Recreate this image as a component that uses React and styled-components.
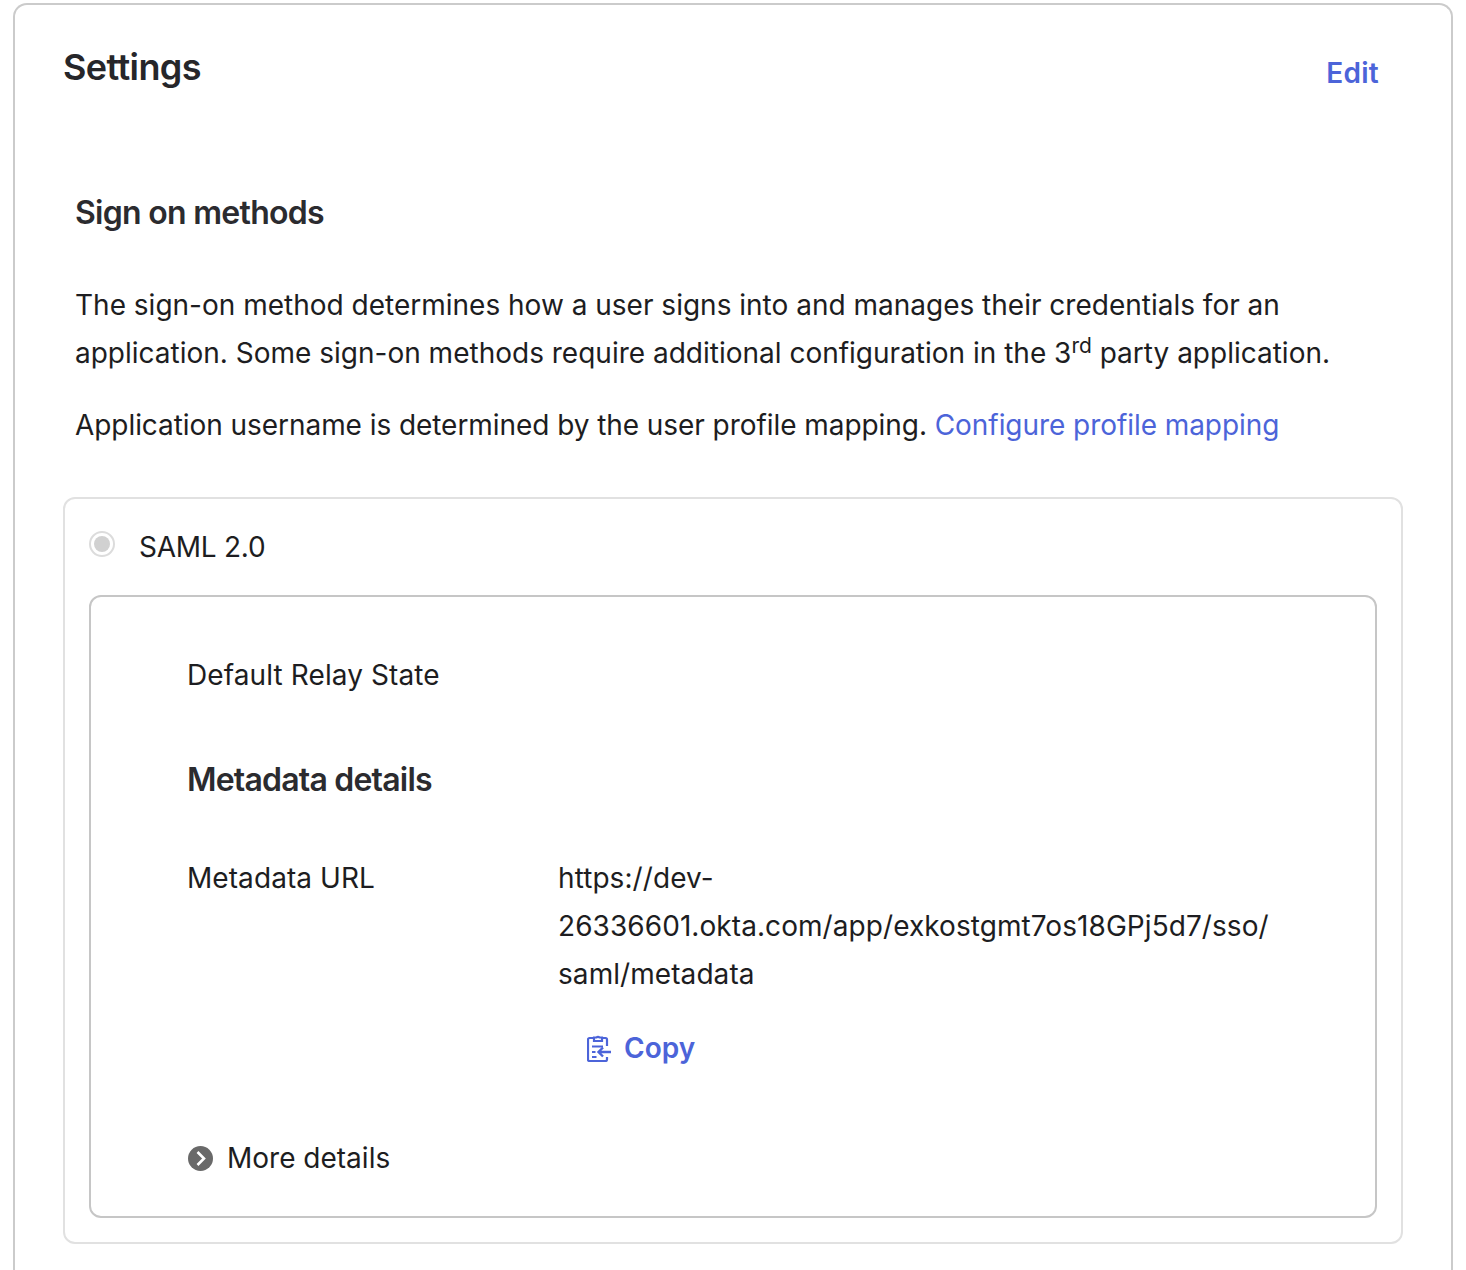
import React from "react";
import styled, { createGlobalStyle } from "styled-components";

const Global = createGlobalStyle`
  html, body {
    margin: 0;
    padding: 0;
    background: #fff;
  }
  body {
    font-family: Inter, "Liberation Sans", sans-serif;
    color: #1d1d21;
  }
`;

const Page = styled.div`
  height: 1270px;
  overflow: hidden;
  padding: 3px 13px 0;
  box-sizing: border-box;
`;

const Card = styled.section`
  border: 2px solid #cbcbcb;
  border-bottom: 0;
  border-radius: 14px 14px 0 0;
  padding: 39px 48px 0;
  height: 1300px;
  box-sizing: border-box;
`;

const Header = styled.header`
  display: flex;
  justify-content: space-between;
  align-items: flex-start;
  padding-right: 24px;
`;

const Title = styled.h2`
  margin: 0;
  font-size: 36px;
  line-height: 46px;
  font-weight: 600;
  letter-spacing: -0.6px;
  color: #26262a;
`;

const EditLink = styled.a`
  font-size: 28px;
  line-height: 40px;
  margin-top: 9px;
  font-weight: 600;
  letter-spacing: 0.3px;
  color: #4c64d9;
`;

const Intro = styled.div`
  padding: 0 12px;
  margin-top: 100px;
`;

const SectionTitle = styled.h3`
  margin: 0;
  font-size: 32px;
  line-height: 40px;
  font-weight: 600;
  letter-spacing: -0.72px;
  color: #2b2b2f;
`;

const Paragraph = styled.p`
  margin: ${(p) => p.$top || 0}px 0 0;
  font-size: 28px;
  line-height: 48px;
  font-weight: 400;
  white-space: nowrap;
  letter-spacing: ${(p) => p.$spacing || 0}px;

  sup {
    font-size: 21px;
    line-height: 0;
  }
`;

const TextLink = styled.a`
  color: #4c64d9;
`;

const MethodBox = styled.div`
  margin-top: 48px;
  border: 2px solid #e1e1e1;
  border-radius: 12px;
  padding: 24px;
`;

const MethodRow = styled.div`
  display: flex;
  align-items: flex-start;
  gap: 24px;
  font-size: 28px;
  line-height: 48px;
  letter-spacing: -0.25px;
`;

const Radio = styled.span`
  width: 26px;
  height: 26px;
  margin-top: 8px;
  border: 2px solid #dcdcdc;
  border-radius: 50%;
  box-sizing: border-box;
  display: flex;
  align-items: center;
  justify-content: center;

  &::after {
    content: "";
    width: 16px;
    height: 16px;
    border-radius: 50%;
    background: #d1d1d1;
  }
`;

const InnerBox = styled.div`
  margin-top: 24px;
  border: 2px solid #c6c6c6;
  border-radius: 12px;
  padding: 54px 96px 34px;
  height: 623px;
  box-sizing: border-box;
`;

const PlainRow = styled.div`
  font-size: 28px;
  line-height: 48px;
  letter-spacing: 0.1px;
`;

const SubTitle = styled.h4`
  margin: 57px 0 0;
  font-size: 32px;
  line-height: 48px;
  font-weight: 600;
  letter-spacing: -0.8px;
  color: #2b2b2f;
`;

const DetailRow = styled.div`
  display: grid;
  grid-template-columns: 371px 1fr;
  margin-top: 50px;
  font-size: 28px;
  line-height: 48px;
  letter-spacing: 0.07px;
`;

const UrlText = styled.div`
  overflow-wrap: anywhere;
`;

const CopyButton = styled.a`
  display: flex;
  align-items: center;
  gap: 13px;
  margin: 26px 0 0 29px;
  font-weight: 600;
  letter-spacing: 0;
  color: #4c64d9;
  line-height: 48px;
`;

const MoreRow = styled.div`
  display: flex;
  align-items: center;
  gap: 14px;
  margin: 62px 0 0 1px;
  font-size: 28px;
  line-height: 48px;
`;

const CopyIcon = () => (
  <svg width="24" height="28" viewBox="0 0 24 28" fill="none" stroke="#4c64d9" strokeWidth="2.2">
    <path d="M7 4H2.500A1.500 1.500 0 0 0 1 5.500v20A1.500 1.500 0 0 0 2.500 27h16a1.500 1.500 0 0 0 1.500-1.500V23M20 12V5.500A1.500 1.500 0 0 0 18.500 4H15" />
    <path d="M7 7V3.500h2.500a2 2 0 0 1 3 0H15V7z" />
    <path d="M5 12.500h11M5 18h3.500M5 23h4.500" />
    <path d="M24 18H11.500M16 13.500L11.500 18l4.500 4.500" strokeWidth="2.400" />
  </svg>
);

const ChevronCircle = () => (
  <svg width="25" height="25" viewBox="0 0 25 25">
    <circle cx="12.500" cy="12.500" r="12.500" fill="#696969" />
    <path d="M9.500 6l6.500 6.500L9.500 19" fill="none" stroke="#fff" strokeWidth="2.600" />
  </svg>
);

export default function App() {
  return (
    <>
      <Global />
      <Page>
        <Card>
          <Header>
            <Title>Settings</Title>
            <EditLink>Edit</EditLink>
          </Header>
          <Intro>
            <SectionTitle>Sign on methods</SectionTitle>
            <Paragraph $top={48}>
              The sign-on method determines how a user signs into and manages their credentials for an
              <br />
              application. Some sign-on methods require additional configuration in the 3<sup>rd</sup> party application.
            </Paragraph>
            <Paragraph $top={24} $spacing={-0.06}>
              Application username is determined by the user profile mapping.{" "}
              <TextLink>Configure profile mapping</TextLink>
            </Paragraph>
          </Intro>
          <MethodBox>
            <MethodRow>
              <Radio />
              SAML 2.0
            </MethodRow>
            <InnerBox>
              <PlainRow>Default Relay State</PlainRow>
              <SubTitle>Metadata details</SubTitle>
              <DetailRow>
                <div>Metadata URL</div>
                <div>
                  <UrlText>
                    https://dev-
                    <br />
                    26336601.okta.com/app/exkostgmt7os18GPj5d7/sso/
                    <br />
                    saml/metadata
                  </UrlText>
                  <CopyButton>
                    <CopyIcon />
                    Copy
                  </CopyButton>
                </div>
              </DetailRow>
              <MoreRow>
                <ChevronCircle />
                More details
              </MoreRow>
            </InnerBox>
          </MethodBox>
        </Card>
      </Page>
    </>
  );
}
